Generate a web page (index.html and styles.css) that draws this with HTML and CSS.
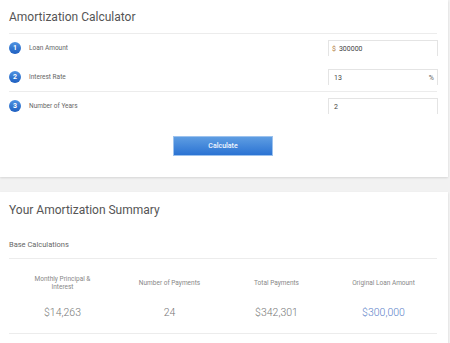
FILE: index.html
```html
<!DOCTYPE html>
<html lang="en">
<head>
  <meta charset="UTF-8">
  <meta name="viewport" content="width=device-width, initial-scale=1.0">
  <title>Amortization Calculator</title>
  <link rel="stylesheet" href="styles.css">
</head>
<body>
  <div class="card card-calc">
    <h1>Amortization Calculator</h1>
    <div class="row">
      <span class="step">1</span>
      <span class="label">Loan Amount</span>
      <div class="field"><span class="prefix">$</span><span class="value">300000</span></div>
    </div>
    <div class="row row-divided">
      <span class="step">2</span>
      <span class="label">Interest Rate</span>
      <div class="field field-pad"><span class="value">13</span><span class="suffix">%</span></div>
    </div>
    <div class="row">
      <span class="step">3</span>
      <span class="label">Number of Years</span>
      <div class="field field-pad"><span class="value">2</span></div>
    </div>
    <div class="actions">
      <button type="button" class="btn">Calculate</button>
    </div>
  </div>

  <div class="card card-summary">
    <h1>Your Amortization Summary</h1>
    <h2>Base Calculations</h2>
    <div class="stats">
      <div class="stat">
        <div class="stat-label">Monthly Principal &amp;<br>Interest</div>
        <div class="stat-value">$14,263</div>
      </div>
      <div class="stat">
        <div class="stat-label">Number of Payments</div>
        <div class="stat-value">24</div>
      </div>
      <div class="stat">
        <div class="stat-label">Total Payments</div>
        <div class="stat-value">$342,301</div>
      </div>
      <div class="stat">
        <div class="stat-label">Original Loan Amount</div>
        <div class="stat-value stat-blue">$300,000</div>
      </div>
    </div>
  </div>
</body>
</html>
```

FILE: styles.css
```css
body {
  margin: 0;
  background-color: #f2f2f2;
  font-family: Roboto, "Liberation Sans", sans-serif;
  color: #555;
}
.card {
  width: 448px;
  box-sizing: border-box;
  padding: 0 11px 0 9px;
  background-color: #fff;
  box-shadow: 0 1px 2px rgba(0, 0, 0, 0.12);
}
.card-calc {
  height: 177px;
}
.card-summary {
  margin-top: 15px;
  height: 151px;
}
h1 {
  margin: 0;
  font-size: 12px;
  font-weight: 400;
  line-height: 16px;
  padding-top: 9px;
  height: 24px;
  color: #555;
}
.card-calc h1 {
  border-bottom: 1px solid #ececec;
}
.row {
  display: flex;
  align-items: center;
  padding: 6px 0 7px;
}
.row-divided {
  padding-bottom: 6px;
  border-bottom: 1px solid #ececec;
}
.step {
  width: 12px;
  height: 12px;
  border-radius: 50%;
  background: linear-gradient(#4f93e2, #1e5fc0);
  color: #fff;
  font-size: 7px;
  font-weight: 700;
  line-height: 12px;
  text-align: center;
}
.label {
  margin-left: 8px;
  font-size: 6.5px;
  color: #666;
  flex: 1;
}
.field {
  width: 110px;
  height: 16px;
  box-sizing: border-box;
  margin-right: -1px;
  border: 1px solid #e4e4e4;
  border-bottom: none;
  display: flex;
  align-items: center;
  padding: 0 3px;
  font-size: 7px;
  color: #444;
}
.field-pad {
  padding-left: 5px;
}
.prefix {
  color: #b07a3c;
  margin-right: 3px;
}
.value {
  flex: 1;
}
.suffix {
  color: #666;
  padding-left: 3px;
}
.actions {
  display: flex;
  justify-content: center;
  margin-top: 15px;
}
.btn {
  width: 100px;
  height: 20px;
  padding: 0;
  border: 1px solid #9cc2ee;
  background: linear-gradient(#5e9de2, #2b73d3);
  color: #f4f8ff;
  font-family: Roboto, "Liberation Sans", sans-serif;
  font-size: 7px;
  font-weight: 500;
}
.card-summary h1 {
  padding-top: 10px;
}
h2 {
  margin: 0;
  font-size: 7.5px;
  font-weight: 400;
  color: #666;
  padding: 14px 0 9px;
  border-bottom: 1px solid #ececec;
}
.stats {
  display: grid;
  grid-template-columns: repeat(4, 1fr);
  border-bottom: 1px solid #ececec;
  height: 75px;
  box-sizing: border-box;
}
.stat {
  display: flex;
  flex-direction: column;
  align-items: center;
  text-align: center;
  padding-top: 12px;
}
.stat-label {
  height: 24px;
  display: flex;
  align-items: center;
  font-size: 6.5px;
  line-height: 8px;
  color: #888;
}
.stat-value {
  margin-top: 11px;
  font-size: 10.5px;
  font-weight: 300;
  color: #777;
}
.stat-blue {
  color: #5b7fc9;
}
```
